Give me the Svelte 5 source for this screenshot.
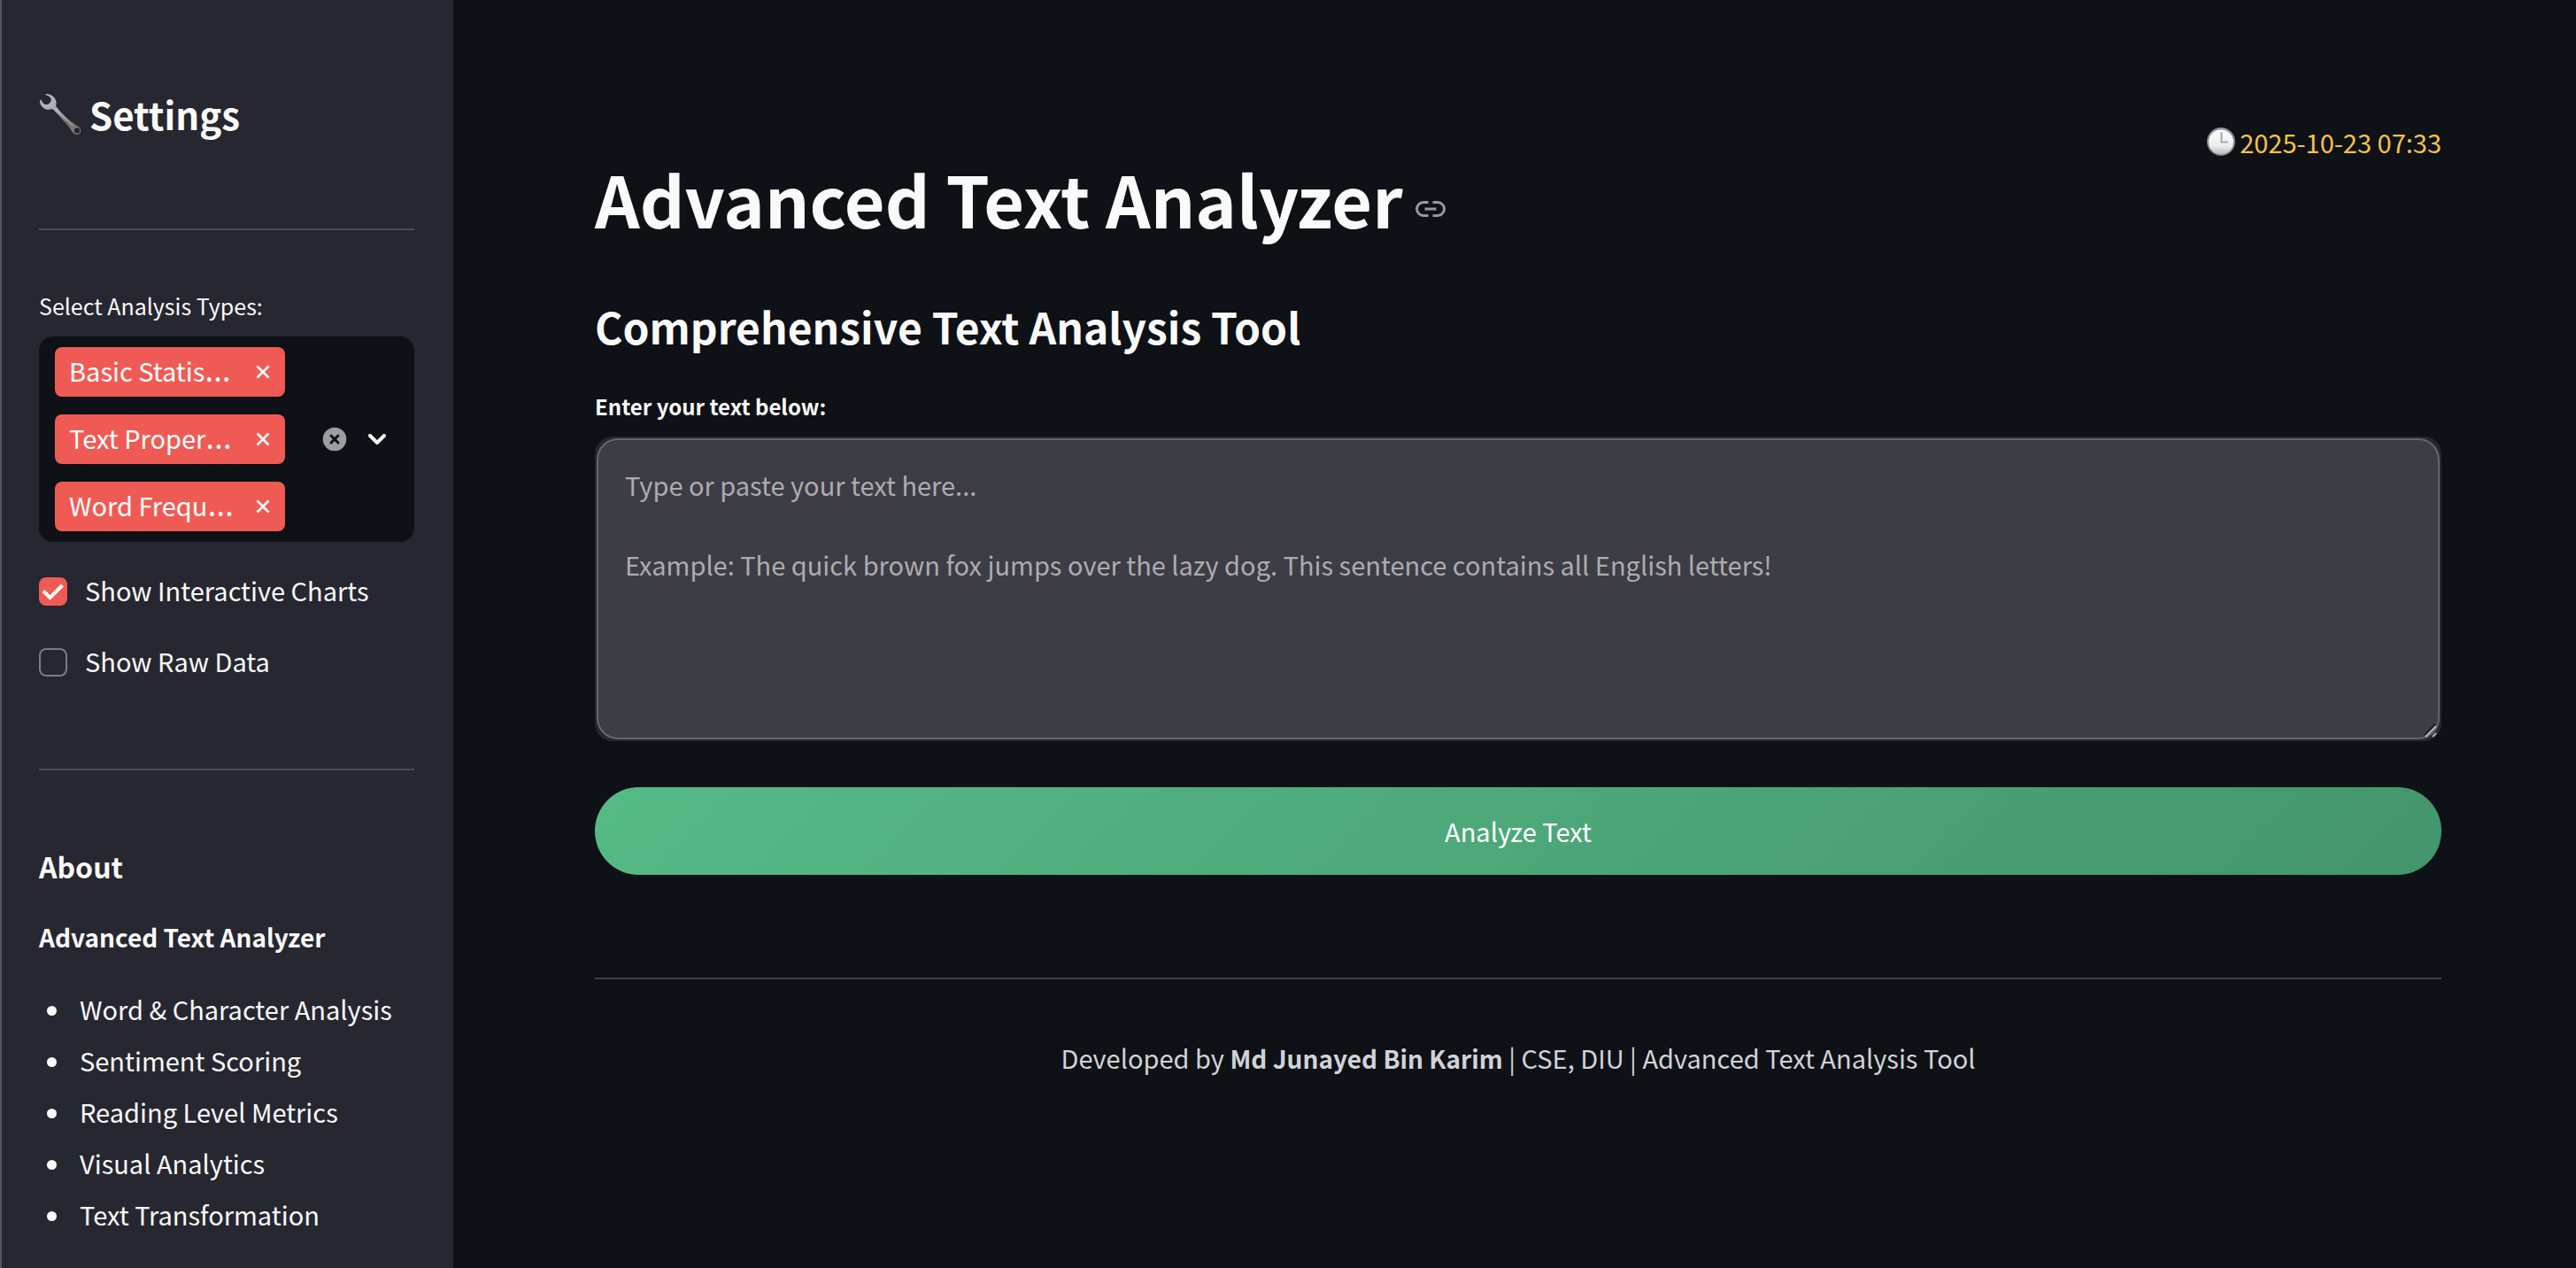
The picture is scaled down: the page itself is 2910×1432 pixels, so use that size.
<script>
  let chips = $state(['Basic Statis', 'Text Proper', 'Word Frequ']);
  let showCharts = $state(true);
  let showRaw = $state(false);
  let text = $state('');

  const features = [
    'Word & Character Analysis',
    'Sentiment Scoring',
    'Reading Level Metrics',
    'Visual Analytics',
    'Text Transformation'
  ];
  const hint =
    'Type or paste your text here...\n\nExample: The quick brown fox jumps over the lazy dog. This sentence contains all English letters!';
</script>

<div class="app">
  <aside class="sidebar">
    <h2 class="settings">
      <svg class="wrench" viewBox="0 0 48 48" aria-hidden="true">
        <defs>
          <linearGradient id="steel" x1="0" y1="0" x2="1" y2="1">
            <stop offset="0" stop-color="#b4bfca" />
            <stop offset="0.4" stop-color="#a3abb5" />
            <stop offset="0.7" stop-color="#75696b" />
            <stop offset="1" stop-color="#8b8789" />
          </linearGradient>
        </defs>
        <path
          fill="url(#steel)"
          fill-rule="evenodd"
          d="M8 1C14 1 19 5 19.500 10C19.700 12 18.800 14 19.500 15.500C26 23.500 34 31 44.500 38C47.500 40 48 43.500 46 45.500C44 47.600 40.500 47.500 38.500 45C32 35.500 24.500 27 16 18.500C14.500 17.500 12.500 19 10 18.800C5 18.500 1 14 1 8.500L2.500 7.500C3.500 11 6 13.500 9 13C12.500 12.500 14.500 9 13.500 6C12.800 3.800 9.500 3 7.500 2.200ZM43 39.200A3.200 3.200 0 1 0 43 45.600A3.200 3.200 0 1 0 43 39.200Z"
        />
        <path d="M19 18.500L38 36.500" stroke="#c3c9d2" stroke-width="1.500" opacity="0.600" />
      </svg>
      <span>Settings</span>
    </h2>
    <hr />

    <div class="field-label" id="types">Select Analysis Types:</div>
    <div class="multi" role="group" aria-labelledby="types">
      <div class="chips">
        {#each chips as chip}
          <div class="chip">
            <span class="chip-text">{chip}<span class="dots">…</span></span>
            <button aria-label="Remove {chip}" onclick={() => (chips = chips.filter((c) => c !== chip))}>
              <svg viewBox="0 0 16 16"><path d="M1.500 1.500l13 13M14.500 1.500l-13 13" /></svg>
            </button>
          </div>
        {/each}
      </div>
      <button class="clear" aria-label="Clear all" onclick={() => (chips = [])}>
        <svg viewBox="0 0 28 28">
          <circle cx="14" cy="14" r="13.300" />
          <path d="M10 10l8 8M18 10l-8 8" />
        </svg>
      </button>
      <button class="open" aria-label="Open">
        <svg viewBox="0 0 20 12"><path d="M2 2l8 8l8-8" /></svg>
      </button>
    </div>

    <label class="check">
      <input type="checkbox" bind:checked={showCharts} />
      <svg viewBox="0 0 32 32" aria-hidden="true"><path d="M5 15.500l7.500 7.500L26.500 9" /></svg>
      <span>Show Interactive Charts</span>
    </label>
    <label class="check">
      <input type="checkbox" bind:checked={showRaw} />
      <svg viewBox="0 0 32 32" aria-hidden="true"><path d="M5 15.500l7.500 7.500L26.500 9" /></svg>
      <span>Show Raw Data</span>
    </label>
    <hr class="second" />

    <h3>About</h3>
    <p class="name">Advanced Text Analyzer</p>
    <ul>
      {#each features as feature}
        <li>{feature}</li>
      {/each}
    </ul>
  </aside>

  <main>
    <div class="time">
      <svg viewBox="0 0 32 32" aria-hidden="true">
        <defs>
          <linearGradient id="rim" x1="0" y1="0" x2="0" y2="1">
            <stop offset="0" stop-color="#8d97a8" />
            <stop offset="1" stop-color="#75777a" />
          </linearGradient>
          <linearGradient id="face" x1="0" y1="0" x2="0" y2="1">
            <stop offset="0" stop-color="#ffffff" />
            <stop offset="0.650" stop-color="#ececec" />
            <stop offset="1" stop-color="#b8b8b8" />
          </linearGradient>
        </defs>
        <circle cx="16" cy="16" r="16" fill="url(#rim)" />
        <circle cx="16" cy="16.500" r="14" fill="url(#face)" />
        <path d="M16.500 5v11.500H24" fill="none" stroke="#a9a9a9" stroke-width="2" />
      </svg>
      <span>2025-10-23 07:33</span>
    </div>
    <h1>
      <span>Advanced Text Analyzer</span>
      <a href="#advanced-text-analyzer" aria-label="Link to heading">
        <svg viewBox="0 0 34 18">
          <path d="M14.500 1.500H9a7.500 7.500 0 0 0 0 15h5.500M19.500 1.500h5.500a7.500 7.500 0 0 1 0 15h-5.500M10.500 9h13" />
        </svg>
      </a>
    </h1>
    <h2 class="subtitle">Comprehensive Text Analysis Tool</h2>

    <label class="text-label" for="source">Enter your text below:</label>
    <div class="area">
      <textarea id="source" placeholder={hint} bind:value={text}></textarea>
      <svg class="grip" viewBox="0 0 16 16" aria-hidden="true">
        <path d="M1 13L13 1" stroke="#1c1c20" stroke-width="2" />
        <path d="M2 15L14 3M10 15L14 11" stroke="#b5b5b8" stroke-width="2" />
      </svg>
    </div>

    <button class="analyze">Analyze Text</button>
    <hr />
    <footer>Developed by <strong>Md Junayed Bin Karim</strong> | CSE, DIU | Advanced Text Analysis Tool</footer>
  </main>
</div>

<style>
  :global(body) {
    margin: 0;
    background: #0e1116;
  }
  .app {
    display: flex;
    min-height: 100vh;
    color: #fafafa;
    font-family: 'Noto Sans CJK SC', 'Open Sans', sans-serif;
    font-size: 29px;
    line-height: 48px;
  }
  h1, h2, h3, p, ul {
    margin: 0;
  }
  button {
    border: 0;
    padding: 0;
    background: none;
    color: inherit;
    font: inherit;
    cursor: pointer;
  }
  svg {
    display: block;
    fill: none;
  }
  hr {
    width: 100%;
    height: 2px;
    margin: 0;
    border: 0;
    background: #4c4c55;
  }

  .sidebar {
    box-sizing: border-box;
    flex: 0 0 512px;
    padding: 100px 44px 0 42px;
    border-left: 2px solid #53545c;
    background: #262730;
  }
  .settings {
    display: flex;
    align-items: center;
    gap: 9px;
    margin-bottom: 100px;
    font-size: 42px;
    line-height: 58px;
    font-weight: 700;
  }
  .wrench {
    width: 48px;
    height: 48px;
  }
  .field-label {
    margin: 64px 0 14px;
    font-size: 25px;
    line-height: 42px;
  }
  .multi {
    display: flex;
    align-items: center;
    padding: 12px 32px 12px 18px;
    margin-bottom: 30px;
    border-radius: 16px;
    background: #0e1116;
  }
  .chips {
    display: grid;
    gap: 20px;
    flex: 1;
  }
  .chip {
    box-sizing: border-box;
    display: flex;
    align-items: center;
    justify-content: space-between;
    width: 260px;
    height: 56px;
    padding: 0 17px 0 16px;
    border-radius: 8px;
    background: #ef5b54;
    color: #fff;
  }
  .chip-text,
  .check span {
    padding-bottom: 4px;
  }
  .dots {
    font-family: 'Open Sans', sans-serif;
    font-size: 38px;
    line-height: 40px;
  }
  .chip svg {
    width: 16px;
    height: 16px;
    stroke: #fff;
    stroke-width: 2.5;
  }
  .clear svg {
    width: 28px;
    height: 28px;
    fill: #9c9d9f;
  }
  .clear path {
    stroke: #0e1116;
    stroke-width: 3;
    stroke-linecap: round;
  }
  .open {
    margin-left: 24px;
  }
  .open svg {
    width: 20px;
    height: 12px;
    stroke: #fafafa;
    stroke-width: 4;
    stroke-linecap: round;
  }
  .check {
    display: grid;
    grid-template-columns: 32px 1fr;
    align-items: center;
    column-gap: 20px;
    margin-bottom: 28px;
  }
  .check input {
    grid-area: 1 / 1;
    appearance: none;
    box-sizing: border-box;
    width: 32px;
    height: 32px;
    margin: 0;
    border: 2px solid #7c7d83;
    border-radius: 8px;
  }
  .check input:checked {
    border-color: #ef5b54;
    background: #ef5b54;
  }
  .check svg {
    grid-area: 1 / 1;
    width: 32px;
    height: 32px;
    stroke: #fafafa;
    stroke-width: 4;
    visibility: hidden;
  }
  .check input:checked + svg {
    visibility: visible;
  }
  .second {
    margin-top: 94px;
  }
  h3 {
    margin: 86px 0 34px;
    font-size: 32px;
    line-height: 44px;
    font-weight: 700;
  }
  .name {
    margin-bottom: 28px;
    font-size: 28px;
    font-weight: 700;
  }
  ul {
    padding-left: 46px;
    line-height: 58px;
  }
  li {
    list-style: none;
    display: flex;
    align-items: center;
  }
  li::before {
    content: '';
    width: 11px;
    height: 11px;
    margin: 4px 26px 0 -37px;
    border-radius: 50%;
    background: #fafafa;
  }

  main {
    flex: 1;
    min-width: 0;
    display: flex;
    flex-direction: column;
    padding: 142px 152px 0 160px;
  }
  .time {
    display: flex;
    align-items: center;
    justify-content: flex-end;
    gap: 5px;
    color: #f5c14b;
    line-height: 36px;
  }
  .time svg {
    width: 32px;
    height: 32px;
  }
  h1 {
    display: flex;
    align-items: center;
    gap: 14px;
    margin: 2px 0 66px;
    font-size: 79px;
    line-height: 88px;
    font-weight: 700;
  }
  h1 svg {
    width: 34px;
    height: 18px;
    margin-top: 24px;
    stroke: #98999b;
    stroke-width: 3;
  }
  .subtitle {
    font-size: 48px;
    line-height: 68px;
    font-weight: 700;
  }
  .text-label {
    margin: 36px 0 13px;
    font-size: 24px;
    line-height: 42px;
    font-weight: 700;
  }
  .area {
    position: relative;
    display: flex;
    padding: 2px;
    border-radius: 20px;
    background: #262730;
  }
  textarea {
    box-sizing: border-box;
    flex: 1;
    height: 340px;
    padding: 28px 30px;
    border: 2px solid #66676c;
    border-radius: 24px;
    background: #3d3d45;
    color: #fafafa;
    font: inherit;
    line-height: 45px;
    resize: none;
    outline: 0;
  }
  textarea::placeholder {
    color: #acacaf;
    opacity: 1;
  }
  .grip {
    position: absolute;
    right: 4px;
    bottom: 4px;
    width: 16px;
    height: 16px;
  }
  .analyze {
    height: 99px;
    padding-bottom: 2px;
    margin: 52px 0 116px;
    border-radius: 50px;
    background: linear-gradient(135deg, #56ba87, #43956c);
    color: #fff;
  }
  main hr {
    background: #3d3e44;
  }
  footer {
    margin-top: 64px;
    text-align: center;
    color: #d1d3d7;
  }
  footer strong {
    font-size: 28px;
  }
</style>
